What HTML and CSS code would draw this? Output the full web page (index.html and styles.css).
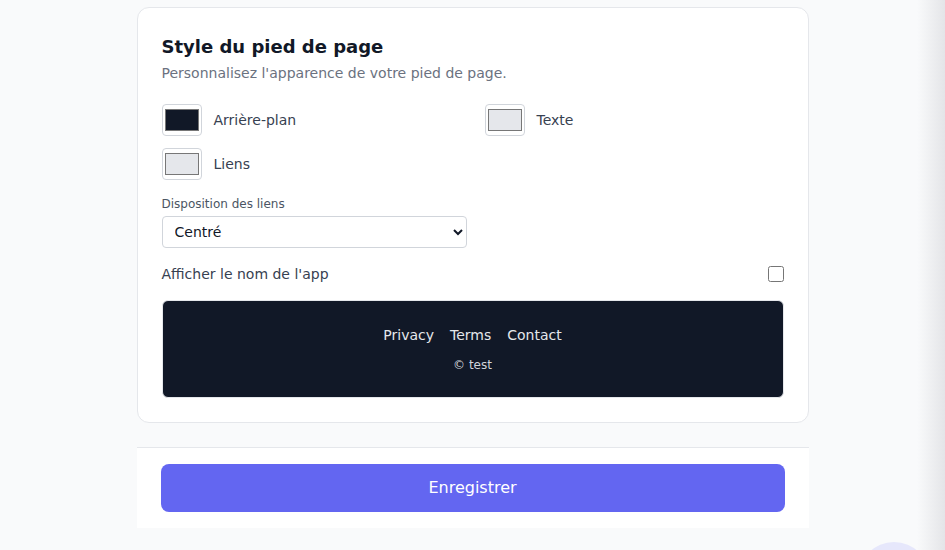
FILE: index.html
```html
<!DOCTYPE html>
<html lang="fr">
<head>
  <meta charset="UTF-8" />
  <title>Style du pied de page</title>
  <link rel="stylesheet" href="styles.css">
</head>
<body>
  <div class="page">
    <div class="card">
      <h2 class="card-title">Style du pied de page</h2>
      <p class="card-sub">Personnalisez l'apparence de votre pied de page.</p>

      <!-- colour pickers -->
      <div class="colors">
        <label class="color-item">
          <input type="color" value="#111827">
          <span>Arrière-plan</span>
        </label>
        <label class="color-item">
          <input type="color" value="#e5e7eb">
          <span>Texte</span>
        </label>
        <label class="color-item">
          <input type="color" value="#e5e7eb">
          <span>Liens</span>
        </label>
      </div>

      <div class="field">
        <label class="field-label" for="layout">Disposition des liens</label>
        <select id="layout" class="select">
          <option>Centré</option>
          <option>Gauche</option>
          <option>Droite</option>
        </select>
      </div>

      <div class="toggle-row">
        <span>Afficher le nom de l'app</span>
        <input type="checkbox" class="check">
      </div>

      <!-- live preview -->
      <div class="preview">
        <div class="preview-links">
          <a href="#">Privacy</a>
          <a href="#">Terms</a>
          <a href="#">Contact</a>
        </div>
        <p class="preview-copy">© test</p>
      </div>
    </div>

    <div class="save-bar">
      <button class="save-btn">Enregistrer</button>
    </div>
  </div>

  <div class="fab"></div>
</body>
</html>
```

FILE: styles.css
```css
* {
  box-sizing: border-box;
}
body {
  margin: 0;
  font-family: "DejaVu Sans", Verdana, sans-serif;
  color: #374151;
  background: linear-gradient(to right, #f9fafb 0, #f9fafb calc(100% - 28px), #e4e5e8 100%);
  min-height: 550px;
  overflow: hidden;
}
.page {
  width: 672px;
  margin: 7px auto 0;
}
.card {
  background: #fff;
  border: 1px solid #e5e7eb;
  border-radius: 12px;
  padding: 25px 24px 24px;
}
.card-title {
  margin: 0;
  font-size: 18px;
  line-height: 28px;
  font-weight: 700;
  color: #111827;
}
.card-sub {
  margin: 2px 0 0;
  font-size: 14px;
  line-height: 20px;
  color: #6b7280;
}
.colors {
  display: grid;
  grid-template-columns: 1fr 1fr;
  column-gap: 24px;
  row-gap: 12px;
  margin-top: 21px;
}
.color-item {
  display: flex;
  align-items: center;
  gap: 12px;
  font-size: 14px;
  color: #374151;
}
.color-item input {
  width: 40px;
  height: 32px;
  padding: 0;
  margin: 0;
  border: 1px solid #d1d5db;
  border-radius: 4px;
  background: #fff;
}
.field {
  margin-top: 16px;
}
.field-label {
  display: block;
  font-size: 12px;
  line-height: 16px;
  color: #4b5563;
  margin-bottom: 4px;
}
.select {
  width: 305px;
  height: 32px;
  padding: 0 8px;
  font-family: inherit;
  font-size: 14px;
  color: #111827;
  background: #fff;
  border: 1px solid #d1d5db;
  border-radius: 4px;
}
.toggle-row {
  display: flex;
  justify-content: space-between;
  align-items: center;
  margin-top: 16px;
  font-size: 14px;
  line-height: 20px;
}
.check {
  width: 16px;
  height: 16px;
  margin: 0;
}
.preview {
  margin-top: 16px;
  background: #111827;
  border: 1px solid #e5e7eb;
  border-radius: 6px;
  padding: 24px;
  text-align: center;
}
.preview-links {
  display: flex;
  justify-content: center;
  gap: 16px;
  font-size: 14px;
  line-height: 20px;
}
.preview-links a {
  color: #e5e7eb;
  text-decoration: none;
}
.preview-copy {
  margin: 12px 0 0;
  font-size: 12px;
  line-height: 16px;
  color: #d1d5db;
}
.save-bar {
  margin-top: 24px;
  background: #fff;
  border-top: 1px solid #e5e7eb;
  padding: 16px 24px;
}
.save-btn {
  display: block;
  width: 100%;
  height: 48px;
  padding: 0 0 2px;
  border: 0;
  border-radius: 8px;
  background: #6366f1;
  color: #fff;
  font-family: inherit;
  font-size: 16px;
}
.fab {
  position: fixed;
  left: 858px;
  top: 542px;
  width: 72px;
  height: 72px;
  border-radius: 50%;
  background: #e6e7fb;
}
```
